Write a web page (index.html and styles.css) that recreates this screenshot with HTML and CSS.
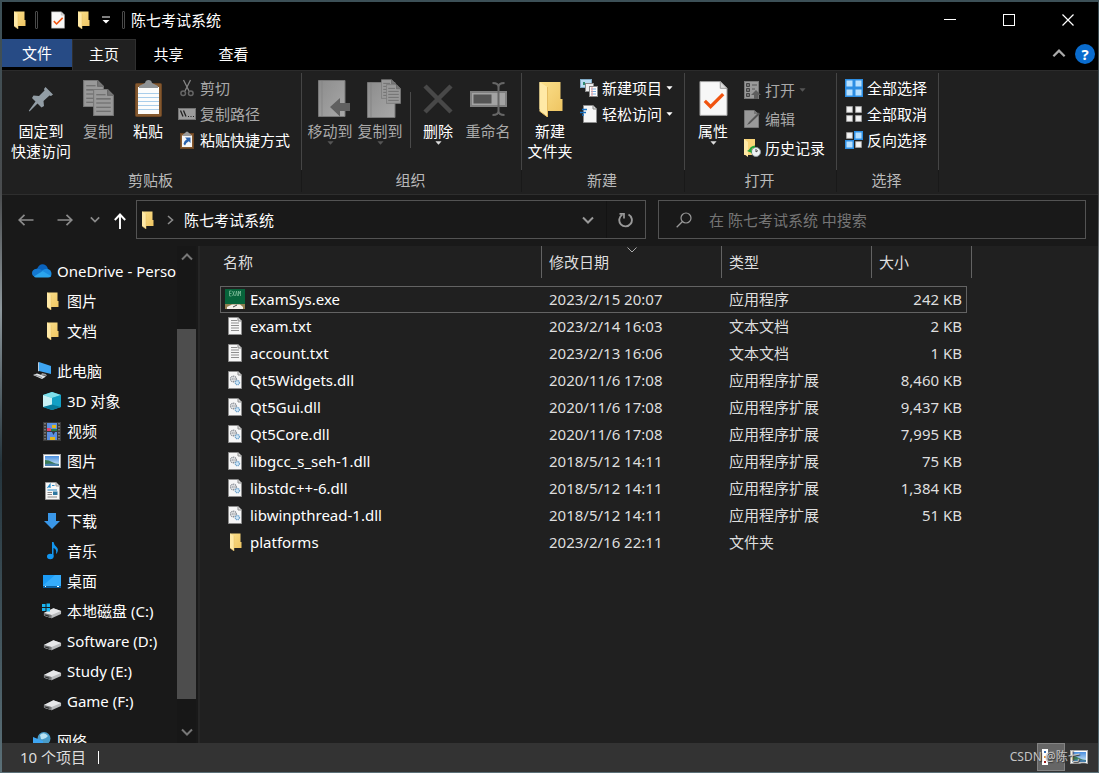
FILE: index.html
```html
<!DOCTYPE html>
<html lang="zh-CN">
<head>
<meta charset="utf-8">
<title>陈七考试系统</title>
<link rel="stylesheet" href="styles.css">
</head>
<body>
<svg class="sprite" aria-hidden="true">
  <defs>
    <linearGradient id="g-folder" x1="0" y1="0" x2="1" y2="1"><stop offset="0" stop-color="#fbe08c"/><stop offset="1" stop-color="#efc562"/></linearGradient>
    <linearGradient id="g-sky" x1="0" y1="0" x2="0" y2="1"><stop offset="0" stop-color="#4a8fe0"/><stop offset="1" stop-color="#d5ecf8"/></linearGradient>
    <linearGradient id="g-grey" x1="0" y1="0" x2="1" y2="1"><stop offset="0" stop-color="#8c8c8c"/><stop offset="1" stop-color="#a8a8a8"/></linearGradient>
  </defs>
  <symbol id="folder" viewBox="0 0 24 36">
    <path d="M1 1H22V18H24V30H6L1 28Z" fill="url(#g-folder)"/>
    <path d="M1 1L9 6V36L1 30Z" fill="#ffe9a6"/>
    <path d="M9 6V36L1 30" fill="none" stroke="#e6bd62"/>
  </symbol>
  <symbol id="checkdoc" viewBox="0 0 30 37">
    <path d="M1 1H22L29 8V36H1Z" fill="#f7f7f7" stroke="#9a9a9a"/>
    <path d="M22 1V8H29Z" fill="#ddd" stroke="#9a9a9a"/>
    <path d="M6 21L12 27L25 14" fill="none" stroke="#f0530f" stroke-width="3.4"/>
  </symbol>
  <symbol id="chev-down" viewBox="0 0 12 8"><path d="M1 1.5L6 6.5L11 1.5" fill="none" stroke="currentColor" stroke-width="2"/></symbol>
  <symbol id="chev-up" viewBox="0 0 12 8"><path d="M1 6.5L6 1.5L11 6.5" fill="none" stroke="currentColor" stroke-width="2"/></symbol>
  <symbol id="tri" viewBox="0 0 8 4"><path d="M0.5 0H7.5L4 4Z" fill="currentColor"/></symbol>
  <symbol id="textdoc" viewBox="0 0 14 18">
    <path d="M0.5 0.5H10L13.5 4V17.5H0.5Z" fill="#f6f6f6" stroke="#8e8e8e"/>
    <path d="M10 0.5V4H13.5" fill="#ddd" stroke="#8e8e8e"/>
    <path d="M3 3.5H9M3 6H11M3 8.5H11M3 11H11M3 13.5H11" stroke="#8f8f8f"/>
  </symbol>
  <symbol id="dll" viewBox="0 0 14 18">
    <path d="M0.5 0.5H10L13.5 4V17.5H0.5Z" fill="#f6f6f6" stroke="#8e8e8e"/>
    <path d="M10 0.5V4H13.5" fill="#ddd" stroke="#8e8e8e"/>
    <circle cx="5.4" cy="8" r="2.8" fill="none" stroke="#8a8f96" stroke-width="1.4" stroke-dasharray="1.2 .6"/><circle cx="5.4" cy="8" r="1" fill="none" stroke="#8a8f96" stroke-width=".7"/>
    <circle cx="9.4" cy="11.6" r="2.1" fill="#cfe5f5" stroke="#6fa3cc" stroke-width="1.3" stroke-dasharray="1.1 .5"/>
  </symbol>
  <symbol id="picture" viewBox="0 0 18 14">
    <rect x=".5" y=".5" width="17" height="13" fill="#fff" stroke="#a5a5a5"/>
    <rect x="2" y="2" width="14" height="10" fill="url(#g-sky)"/>
    <path d="M2 6Q6 6 9 8T16 10V12H2Z" fill="#3c7a55"/><path d="M2 10Q9 9 16 10.5V12H2Z" fill="#467fae"/>
  </symbol>
  <symbol id="drive" viewBox="0 0 20 12">
    <path d="M1 6L11 1L19 4V7L9 11.5L1 9Z" fill="#b9bbbd"/>
    <path d="M1 6L11 1L19 4L9 8Z" fill="#e6e7e9"/>
    <path d="M1 6L9 8V11.5L1 9Z" fill="#77797b"/><path d="M2.3 7.6L6.5 8.8V9.9L2.3 8.7Z" fill="#222"/>
  </symbol>
  <symbol id="tile" viewBox="0 0 8 8"><rect x=".75" y=".75" width="6.5" height="6.5" fill="#f4f4f4" stroke="#aaa"/></symbol>
  <symbol id="tile-on" viewBox="0 0 9 9"><rect width="9" height="9" fill="#2d8ee3"/><rect x="1.5" y="1.5" width="6" height="6" fill="#b7e0ff"/></symbol>
  <symbol id="greydoc" viewBox="0 0 20 26">
    <path d="M.5 .5H14L19.500 6V25.500H.5Z" fill="#999" stroke="#777"/>
    <path d="M14 .5V6H19.500" fill="#777" stroke="#666"/>
    <path d="M3 5.500H12M3 9.500H17M3 13.500H17M3 17.500H17M3 21.500H17" stroke="#666"/>
  </symbol>
</svg>

<div class="window">
  <header class="titlebar">
    <svg class="qfolder" width="13" height="18"><use href="#folder"/></svg>
    <span class="tsep"></span>
    <button class="qbtn" aria-label="属性"><svg width="14" height="18"><use href="#checkdoc"/></svg></button>
    <button class="qbtn" aria-label="新建文件夹"><svg width="13" height="18"><use href="#folder"/></svg></button>
    <button class="qbtn qmore" aria-label="自定义快速访问工具栏"><svg width="8" height="8" viewBox="0 0 8 8"><path d="M0 1H8" stroke="#fff"/><path d="M.5 4H7.500L4 7.500Z" fill="#fff"/></svg></button>
    <span class="tsep"></span>
    <h1 class="title">陈七考试系统</h1>
    <div class="caption">
      <button aria-label="最小化"><svg width="12" height="12"><path d="M0 5.500H12" stroke="#fff"/></svg></button>
      <button aria-label="最大化"><svg width="12" height="12"><rect x=".5" y=".5" width="11" height="11" fill="none" stroke="#fff"/></svg></button>
      <button aria-label="关闭"><svg width="12" height="12"><path d="M.5 .5L11.500 11.500M11.500 .5L.5 11.500" stroke="#fff" stroke-width="1.200"/></svg></button>
    </div>
  </header>

  <nav class="tabs">
    <button class="tab file">文件</button>
    <button class="tab active">主页</button>
    <button class="tab">共享</button>
    <button class="tab">查看</button>
    <div class="tabtools">
      <button class="collapse" aria-label="折叠功能区"><svg width="14" height="9"><use href="#chev-up"/></svg></button>
      <button class="help">?</button>
    </div>
  </nav>

  <section class="ribbon">
    <div class="group clip">
      <div class="tools">
        <button class="big wide"><span class="pic"><svg width="26" height="26" viewBox="0 0 26 26"><path d="M17.500 1L25 8.500L23 10L21.500 9.500L15.500 15L16 20L13.500 21.500L9.500 17.500L1.500 25.500L.8 24.800L7.500 15.500L4 12L5.500 9.500L11 10L16.500 4.500L16 3Z" fill="#929da5"/></svg></span><span>固定到<br>快速访问</span></button>
        <button class="big off"><span class="pic"><svg width="31" height="37"><use href="#greydoc" width="21" height="27" x="0" y="0"/><use href="#greydoc" width="21" height="27" x="10" y="9"/></svg></span><span>复制</span></button>
        <button class="big"><span class="pic"><svg width="27" height="37" viewBox="0 0 27 37"><rect x=".5" y="3.500" width="26" height="33" rx="1" fill="#84592f" stroke="#6b4524"/><rect x="3" y="7" width="21" height="27" fill="#fcfcfc"/><path d="M3 13.500H24M3 17.500H24M3 21.500H24M3 25.500H24M3 29.500H24" stroke="#a9cdea"/><path d="M4 8V6L10 3Q10.500 0 13.500 0T17 3L23 6V8Z" fill="#8f9396"/></svg></span><span>粘贴</span></button>
        <div class="stack">
          <button class="small off"><span class="ico"><svg width="14" height="18" viewBox="0 0 14 18"><path d="M3.500 1L9 12M10.500 1L5 12" stroke="#858585" stroke-width="1.300"/><circle cx="3.200" cy="14.300" r="2.300" fill="none" stroke="#666" stroke-width="1.500"/><circle cx="10.800" cy="14.300" r="2.300" fill="none" stroke="#666" stroke-width="1.500"/></svg></span>剪切</button>
          <button class="small off"><span class="ico"><svg width="18" height="12" viewBox="0 0 18 12"><rect x=".5" y=".5" width="17" height="11" fill="#9c9c9c" stroke="#747474"/><path d="M2.500 2.500L5 8.500M5.500 2.500L8 8.500" stroke="#222" stroke-width="1.300"/><path d="M10 8.500h1M12.500 8.500h1M15 8.500h1" stroke="#222"/></svg></span>复制路径</button>
          <button class="small"><span class="ico"><svg width="14" height="18" viewBox="0 0 14 18"><rect x=".5" y="2.500" width="13" height="15" fill="#84592f" stroke="#6b4524"/><rect x="2" y="4.500" width="10" height="11.500" fill="#f7f7f7"/><path d="M3 5V3.500L5 2Q7 -1 9 2L11 3.500V5Z" fill="#9a9a9a"/><path d="M5 6.500H10.500V12L8.800 10.300Q6 11.500 5 14.500L3.500 13Q4 9.800 6.800 8.300Z" fill="#2a62ad"/></svg></span>粘贴快捷方式</button>
        </div>
      </div>
      <h2>剪贴板</h2>
    </div>

    <div class="group org">
      <div class="tools">
        <button class="big off"><span class="pic trail"><svg width="32" height="37" viewBox="0 0 32 37"><path d="M.5 .5H27V36.500H.5Z" fill="url(#g-grey)" stroke="#777"/><path d="M4 1V36" stroke="#858585"/><path d="M12 27L22 18V23H32V31H22V36.500Z" fill="#606060"/></svg></span><span>移动到</span><svg class="drop" width="7" height="4"><use href="#tri"/></svg></button>
        <button class="big off"><span class="pic trail"><svg width="34" height="39" viewBox="0 0 34 39"><path d="M.5 3.500H28V38.500H.5Z" fill="url(#g-grey)" stroke="#777"/><path d="M4 4V38" stroke="#858585"/><use href="#greydoc" x="14" y="0" width="15" height="20"/><use href="#greydoc" x="19" y="5" width="15" height="20"/></svg></span><span>复制到</span><svg class="drop" width="7" height="4"><use href="#tri"/></svg></button>
        <span class="vsep"></span>
        <button class="big"><span class="pic"><svg width="30" height="30" viewBox="0 0 30 30"><path d="M2 2L28 28M28 2L2 28" stroke="#484848" stroke-width="4.500"/></svg></span><span>删除</span><svg class="drop" width="7" height="4"><use href="#tri"/></svg></button>
        <button class="big off"><span class="pic"><svg width="37" height="34" viewBox="0 0 37 34"><rect x="1" y="10" width="35" height="14" fill="#a3a3a3" stroke="#808080" stroke-width="2"/><rect x="3.500" y="12.500" width="18" height="9" fill="#555"/><path d="M22.500 1Q28.500 1 28.500 5Q28.500 1 34.500 1M28.500 4V30M22.500 33Q28.500 33 28.500 29Q28.500 33 34.500 33" fill="none" stroke="#666" stroke-width="2"/></svg></span><span>重命名</span></button>
      </div>
      <h2>组织</h2>
    </div>

    <div class="group new">
      <div class="tools">
        <button class="big"><span class="pic"><svg width="25" height="36"><use href="#folder"/></svg></span><span>新建<br>文件夹</span></button>
        <div class="stack">
          <button class="small"><span class="ico"><svg width="18" height="18" viewBox="0 0 18 18"><rect x=".5" y=".5" width="11" height="8" fill="#b9dcf2" stroke="#7fa9c5"/><path d="M3 6V3H5V6Z" fill="#2e8a70"/><rect x="5.500" y="4.500" width="8" height="8" fill="#eee" stroke="#888"/><rect x="9.500" y="7.500" width="8" height="10" fill="#fff" stroke="#888"/><path d="M11 10H16M11 12.500H16M11 15H16" stroke="#7baee0"/><path d="M12 8V17" stroke="#f09a94"/></svg></span>新建项目<svg class="more" width="7" height="4"><use href="#tri"/></svg></button>
          <button class="small"><span class="ico"><svg width="18" height="18" viewBox="0 0 18 18"><path d="M3.500 .5H13L16.500 4V17.500H3.500Z" fill="#f6f6f6" stroke="#8e8e8e"/><path d="M13 .5V4H16.500" fill="#ddd" stroke="#888"/><path d="M2 4.500H7M0 7.500H6M2 10H4" stroke="#1672c4" stroke-width="1.400"/></svg></span>轻松访问<svg class="more" width="7" height="4"><use href="#tri"/></svg></button>
        </div>
      </div>
      <h2>新建</h2>
    </div>

    <div class="group open">
      <div class="tools">
        <button class="big"><span class="pic"><svg width="29" height="37"><use href="#checkdoc"/></svg></span><span>属性</span><svg class="drop" width="7" height="4"><use href="#tri"/></svg></button>
        <div class="stack loose">
          <button class="small off"><span class="ico"><svg width="17" height="18" viewBox="0 0 17 18"><rect x=".5" y=".5" width="14" height="17" fill="#9a9a9a" stroke="#777"/><path d="M2.500 2.500h3v3h-3zM2.500 7.500h3v3h-3zM2.500 12.500h3v3h-3z" fill="#777" stroke="#444"/><path d="M8 4H13M8 8H11" stroke="#555"/><path d="M12 9L17 14H14V18H10V14H7Z" fill="#5e5e5e"/></svg></span>打开<svg class="more" width="7" height="4"><use href="#tri"/></svg></button>
          <button class="small off"><span class="ico"><svg width="16" height="18" viewBox="0 0 16 18"><path d="M.5 .5H10L14.500 4V17.500H.5Z" fill="#999" stroke="#777"/><path d="M10 .5V4H14.500" fill="#777"/><path d="M3 15L5 12L14.500 2.500L16 4L6 13.500Z" fill="#555"/></svg></span>编辑</button>
          <button class="small"><span class="ico"><svg width="18" height="18" viewBox="0 0 18 18"><path d="M1 0H12V9L9 16H1Z" fill="#f8d477"/><path d="M1 0L5 3V18L1 15Z" fill="#ffe9a6"/><circle cx="13" cy="13" r="4.500" fill="#edf1f3" stroke="#8e979d"/><path d="M13 10V13L15 11.500" fill="none" stroke="#444"/><path d="M4 12L8 9.500L9 14Z" fill="#23a33b"/><path d="M7 13Q7 8 12 7.500" fill="none" stroke="#23a33b" stroke-width="2.200"/></svg></span>历史记录</button>
        </div>
      </div>
      <h2>打开</h2>
    </div>

    <div class="group select">
      <div class="tools">
        <div class="stack">
          <button class="small"><span class="ico"><svg width="18" height="18"><use href="#tile-on" x="0" y="0" width="9" height="9"/><use href="#tile-on" x="9" y="0" width="9" height="9"/><use href="#tile-on" x="0" y="9" width="9" height="9"/><use href="#tile-on" x="9" y="9" width="9" height="9"/></svg></span>全部选择</button>
          <button class="small"><span class="ico"><svg width="18" height="18"><use href="#tile" x="1" y="1" width="7" height="7"/><use href="#tile" x="10" y="1" width="7" height="7"/><use href="#tile" x="1" y="10" width="7" height="7"/><use href="#tile" x="10" y="10" width="7" height="7"/></svg></span>全部取消</button>
          <button class="small"><span class="ico"><svg width="18" height="18"><use href="#tile" x="1" y="1" width="7" height="7"/><use href="#tile-on" x="9" y="0" width="9" height="9"/><use href="#tile-on" x="0" y="9" width="9" height="9"/><use href="#tile" x="10" y="10" width="7" height="7"/></svg></span>反向选择</button>
        </div>
      </div>
      <h2>选择</h2>
    </div>
  </section>

  <div class="navbar">
    <div class="history">
      <button aria-label="后退"><svg width="16" height="12" viewBox="0 0 16 12"><path d="M1 6H15.500M6.500 .8L1.200 6L6.500 11.200" fill="none" stroke="#8b8b8b" stroke-width="1.700"/></svg></button>
      <button aria-label="前进"><svg width="16" height="12" viewBox="0 0 16 12"><path d="M.5 6H15M9.500 .8L14.800 6L9.500 11.200" fill="none" stroke="#8b8b8b" stroke-width="1.700"/></svg></button>
      <button class="recent" aria-label="最近浏览的位置"><svg width="10" height="7"><use href="#chev-down"/></svg></button>
      <button class="up" aria-label="向上"><svg width="12" height="16" viewBox="0 0 12 16"><path d="M6 16V1.500M.8 7L6 1.500L11.200 7" fill="none" stroke="#fff" stroke-width="1.900"/></svg></button>
    </div>
    <div class="address">
      <svg width="13" height="18"><use href="#folder"/></svg>
      <svg class="crumb" width="7" height="10" viewBox="0 0 7 10"><path d="M1 1L5.500 5L1 9" fill="none" stroke="#8b8b8b" stroke-width="1.600"/></svg>
      <span class="path">陈七考试系统</span>
      <button class="list" aria-label="以前的位置"><svg width="12" height="8"><use href="#chev-down"/></svg></button>
      <button class="refresh" aria-label="刷新"><svg width="16" height="16" viewBox="0 0 16 16"><path d="M10.500 2.500A6.300 6.300 0 1 1 4.300 2.700" fill="none" stroke="#999" stroke-width="1.900"/><path d="M1.500 1.800H6V6.500" fill="none" stroke="#999" stroke-width="1.700"/></svg></button>
    </div>
    <label class="search">
      <svg width="16" height="16" viewBox="0 0 16 16"><circle cx="10" cy="6" r="5" fill="none" stroke="#999" stroke-width="1.200"/><path d="M6.500 9.500L.7 15.300" stroke="#999" stroke-width="1.300"/></svg>
      <input type="text" aria-label="搜索" placeholder="在 陈七考试系统 中搜索">
    </label>
  </div>

  <main class="body">
    <aside class="side">
      <ul class="tree">
        <li><span class="ico"><svg width="20" height="14" viewBox="0 0 20 14"><path d="M5 5Q7 0 11 .3Q15 1 16 5L10 9Z" fill="#0a63bd"/><path d="M4.500 4.800Q8 4 10.500 7L4 13Q0 12.500 0 9T4.500 4.800Z" fill="#1478d0"/><path d="M10 6.500Q15 3 18.500 6.500Q20.500 10 18.500 13L13 11Z" fill="#1b8be0"/><path d="M2 12.500L10.500 7L19 12Q18 13.500 16 13.500H4Q2.500 13.300 2 12.500Z" fill="#2ba5ee"/></svg></span>OneDrive - Personal</li>
        <li class="sub"><span class="ico"><svg width="13" height="18"><use href="#folder"/></svg></span>图片</li>
        <li class="sub"><span class="ico"><svg width="13" height="18"><use href="#folder"/></svg></span>文档</li>
        <li class="top"><span class="ico"><svg width="20" height="18" viewBox="0 0 20 18"><path d="M7 0L19 4V12L7 9Z" fill="#3ea5f2"/><path d="M7 0V9L6 9.500V.5Z" fill="#bcd"/><path d="M10 11L14 12L15 14L9 13Z" fill="#999"/><path d="M1 13L5 11.500L14 14.500L10 17Z" fill="#dfe3e6"/><path d="M3 13L10 15.500" stroke="#8a8f94"/></svg></span>此电脑</li>
        <li class="sub"><span class="ico"><svg width="18" height="18" viewBox="0 0 18 18"><path d="M9 0L18 3V15L9 18L0 15V3Z" fill="#1fb3cf"/><path d="M0 3L9 0L18 3L9 6Z" fill="#7fe0ec"/><path d="M0 3L9 6V14L0 15Z" fill="#c9f1f5"/><path d="M9 6L18 3V15L9 13Z" fill="#12a0c5"/><path d="M0 15L9 12.500L18 15L9 18Z" fill="#087b9c"/></svg></span>3D 对象</li>
        <li class="sub"><span class="ico"><svg width="18" height="19" viewBox="0 0 18 19"><rect width="18" height="19" fill="#3a3a3a"/><path d="M2 1V19M16 1V19" stroke="#777" stroke-width="2" stroke-dasharray="1.500 1.500"/><rect x="4" y="1" width="10" height="8" fill="#5b8fe0"/><rect x="4" y="10" width="10" height="8" fill="#5b8fe0"/><path d="M4 6H8V9H4Z" fill="#e1426b"/><path d="M9 3H13V6H9ZM7 15H12V18H7Z" fill="#e3b71e"/><path d="M8 7H14V9H8Z" fill="#26804a"/><path d="M9 10H12L10.500 13Z" fill="#26364a"/></svg></span>视频</li>
        <li class="sub"><span class="ico"><svg width="18" height="14"><use href="#picture"/></svg></span>图片</li>
        <li class="sub"><span class="ico"><svg width="15" height="18" viewBox="0 0 15 18"><path d="M.5 .5H11L14.500 4V17.500H.5Z" fill="#f6f6f6" stroke="#999"/><path d="M11 .5V4H14.500" fill="#ddd" stroke="#999"/><path d="M2.500 6L5 2.500V6M7 3.500H9.500M2.500 8H12" fill="none" stroke="#2489c7" stroke-width="1.200"/><path d="M2.500 10.500H7M2.500 12.500H7M2.500 15H12" stroke="#888"/><rect x="8" y="9.500" width="4.500" height="3.500" fill="#2d76a0"/></svg></span>文档</li>
        <li class="sub"><span class="ico"><svg width="16" height="16" viewBox="0 0 16 16"><path d="M4 0H12V8H16L8 16L0 8H4Z" fill="#3a97e8"/></svg></span>下载</li>
        <li class="sub"><span class="ico"><svg width="13" height="18" viewBox="0 0 13 18"><path d="M6 0H7.500Q8 3 10.500 5T11 11L10 12Q11 7 7.500 6V14.500H6Z" fill="#1296f0"/><ellipse cx="4.300" cy="14.500" rx="3.300" ry="2.700" fill="#1296f0"/></svg></span>音乐</li>
        <li class="sub"><span class="ico"><svg width="18" height="13" viewBox="0 0 18 13"><rect width="18" height="13" fill="#1b9bf5"/><path d="M0 10.500L12 0H18V11H0Z" fill="#35acfb"/><path d="M0 12H18" stroke="#0b5f9f" stroke-width="2"/><path d="M2 11.500H3M14 11.500H16" stroke="#fff"/></svg></span>桌面</li>
        <li class="sub"><span class="ico"><svg width="20" height="16" viewBox="0 0 20 16"><use href="#drive" x="1" y="4" width="19" height="12"/><path d="M0 1h3.500v3H0zM4.500 .5H8v3.500H4.500zM0 5h3.500v3H0zM4.500 5H8v3.500H4.500z" fill="#19b5f2"/></svg></span>本地磁盘 (C:)</li>
        <li class="sub disk"><span class="ico"><svg width="19" height="12"><use href="#drive"/></svg></span>Software (D:)</li>
        <li class="sub disk"><span class="ico"><svg width="19" height="12"><use href="#drive"/></svg></span>Study (E:)</li>
        <li class="sub disk"><span class="ico"><svg width="19" height="12"><use href="#drive"/></svg></span>Game (F:)</li>
        <li class="top"><span class="ico"><svg width="20" height="18" viewBox="0 0 20 18"><circle cx="12" cy="6.500" r="6.500" fill="#4a9cc8"/><path d="M8 3Q12 -1 16 4Q13 8 9 7Z" fill="#b9e2f2"/><path d="M1 5L11 9V17L1 14Z" fill="#3ea5f2"/><path d="M3 16L12 15L15 17L6 18Z" fill="#ddd"/></svg></span>网络</li>
      </ul>
      <div class="scroll">
        <button aria-label="向上滚动"><svg width="12" height="8"><use href="#chev-up"/></svg></button>
        <div class="track"><div class="thumb"></div></div>
        <button aria-label="向下滚动"><svg width="12" height="8"><use href="#chev-down"/></svg></button>
      </div>
    </aside>

    <section class="content">
      <table class="files">
        <thead>
          <tr>
            <th class="c-name"><button>名称</button></th>
            <th class="c-date"><button>修改日期<svg class="sort" width="10" height="6" viewBox="0 0 10 6"><path d="M.5 .5L5 5L9.500 .5" fill="none" stroke="#aaa"/></svg></button></th>
            <th class="c-type"><button>类型</button></th>
            <th class="c-size"><button>大小</button></th>
          </tr>
        </thead>
        <tbody>
          <tr class="focus"><td><span class="fname"><span class="ico"><svg width="20" height="20" viewBox="0 0 20 20"><rect width="20" height="20" fill="#07643b"/><path d="M4.500 2V7M4.500 2H6.500M4.500 4.500H6.500M4.500 7H6.500M7.500 2L9.500 7M9.500 2L7.500 7M10.500 7L11.500 2L12.500 7M13.500 7V2L14.500 4.500L15.500 2V7" fill="none" stroke="#86c2a0" stroke-width=".7"/><rect y="15" width="20" height="5" fill="#8f7f50"/><path d="M2 18L7 15.500H15L18 18V20H2Z" fill="#f3efe9"/><path d="M8 18L12 16" stroke="#444"/></svg></span>ExamSys.exe</span></td><td>2023/2/15 20:07</td><td>应用程序</td><td>242 KB</td></tr>
          <tr><td><span class="fname"><span class="ico"><svg width="14" height="18"><use href="#textdoc"/></svg></span>exam.txt</span></td><td>2023/2/14 16:03</td><td>文本文档</td><td>2 KB</td></tr>
          <tr><td><span class="fname"><span class="ico"><svg width="14" height="18"><use href="#textdoc"/></svg></span>account.txt</span></td><td>2023/2/13 16:06</td><td>文本文档</td><td>1 KB</td></tr>
          <tr><td><span class="fname"><span class="ico"><svg width="14" height="18"><use href="#dll"/></svg></span>Qt5Widgets.dll</span></td><td>2020/11/6 17:08</td><td>应用程序扩展</td><td>8,460 KB</td></tr>
          <tr><td><span class="fname"><span class="ico"><svg width="14" height="18"><use href="#dll"/></svg></span>Qt5Gui.dll</span></td><td>2020/11/6 17:08</td><td>应用程序扩展</td><td>9,437 KB</td></tr>
          <tr><td><span class="fname"><span class="ico"><svg width="14" height="18"><use href="#dll"/></svg></span>Qt5Core.dll</span></td><td>2020/11/6 17:08</td><td>应用程序扩展</td><td>7,995 KB</td></tr>
          <tr><td><span class="fname"><span class="ico"><svg width="14" height="18"><use href="#dll"/></svg></span>libgcc_s_seh-1.dll</span></td><td>2018/5/12 14:11</td><td>应用程序扩展</td><td>75 KB</td></tr>
          <tr><td><span class="fname"><span class="ico"><svg width="14" height="18"><use href="#dll"/></svg></span>libstdc++-6.dll</span></td><td>2018/5/12 14:11</td><td>应用程序扩展</td><td>1,384 KB</td></tr>
          <tr><td><span class="fname"><span class="ico"><svg width="14" height="18"><use href="#dll"/></svg></span>libwinpthread-1.dll</span></td><td>2018/5/12 14:11</td><td>应用程序扩展</td><td>51 KB</td></tr>
          <tr><td><span class="fname"><span class="ico"><svg width="13" height="18"><use href="#folder"/></svg></span>platforms</span></td><td>2023/2/16 22:11</td><td>文件夹</td><td></td></tr>
        </tbody>
      </table>
    </section>
  </main>

  <footer class="status">
    <span class="count">10 个项目</span>
    <span class="bar"></span>
    <div class="views">
      <button class="view on" aria-label="详细信息"><svg width="18" height="16" viewBox="0 0 18 16"><rect width="6" height="16" fill="#fff"/><path d="M2 2h2v2H2z" fill="#3b6fb5"/><path d="M2 7h2v2H2z" fill="#e29a2d"/><path d="M2 12h2v2H2z" fill="#a02020"/><path d="M8 3H12M8 8H12M8 13H12" stroke="#8a8a8a"/></svg></button>
      <button class="view" aria-label="大缩略图"><svg width="18" height="14"><use href="#picture"/></svg></button>
      <span class="mark">CSDN @陈七_</span>
    </div>
  </footer>
</div>
</body>
</html>
```
FILE: styles.css
```css
* { box-sizing: border-box; }
html, body { height: 100%; }
body {
  margin: 0;
  padding: 2px 1px 1px 2px;
  background: linear-gradient(#3c5057, #4a4c4e 25%, #8d979c 40%, #24343c 60%, #5b7078);
  color: #fff;
  font: 15px/20px "Noto Sans", "Noto Sans CJK SC", sans-serif;
}
button {
  padding: 0;
  border: 0;
  background: none;
  color: inherit;
  font: inherit;
}
svg { display: block; flex: none; }
.sprite { position: absolute; width: 0; height: 0; }
h1, h2 { margin: 0; font: inherit; }
.ico { display: flex; flex: none; align-items: center; justify-content: center; }

.window {
  display: flex;
  flex-direction: column;
  height: 100%;
  overflow: hidden;
  background: #191919;
}

/* Title bar */
.titlebar { display: flex; flex: none; align-items: center; height: 37px; padding: 0 1px 2px 0; background: #000; }
.qfolder { margin: 0 9px 0 11px; }
.tsep { width: 3px; height: 18px; border: 1px solid #4a4a4a; border-radius: 1px; }
.qbtn { margin-left: 12px; }
.tsep + .qbtn { margin-left: 13px; }
.qmore { margin-right: 12px; }
.title { margin-left: 6px; }
.caption { display: flex; align-self: stretch; margin-left: auto; }
.caption button { display: flex; align-items: center; justify-content: center; width: 59px; }

/* Ribbon tabs */
.tabs { display: flex; flex: none; height: 31px; background: #000; }
.tab { width: 65px; height: 31px; padding-bottom: 2px; }
.tab.file { width: 70px; height: 28px; padding-bottom: 0; background: #274b85; }
.tab.active { width: 64px; background: #202020; border: 1px solid #2f2f2f; border-bottom: 0; }
.tabtools { display: flex; align-items: center; gap: 9px; margin-left: auto; padding: 0 3px 2px 0; }
.collapse { color: #aaa; }
.help {
  width: 20px;
  height: 20px;
  border-radius: 50%;
  background: #0a6cce;
  font-weight: bold;
}

/* Ribbon */
.ribbon {
  display: flex;
  flex: none;
  height: 125px;
  padding-top: 2px;
  background: #202020;
  border-top: 1px solid #2b2b2b;
  border-bottom: 1px solid #2e2e2e;
}
.group { display: flex; flex-direction: column; flex: none; }
.group .tools { display: flex; height: 97px; padding-top: 5px; border-right: 1px solid #454545; }
.group h2 { height: 22px; padding-right: 2px; border-right: 1px solid #191919; color: #b9b9b9; text-align: center; }
.clip { width: 300px; }
.org { width: 220px; }
.new { width: 163px; }
.open { width: 152px; }
.select { width: 102px; }
.clip .tools { padding-left: 7px; }
.org .tools, .new .tools, .open .tools { padding-left: 3px; }
.select .tools { padding-left: 8px; }

.big { display: flex; flex-direction: column; align-items: center; width: 50px; white-space: nowrap; }
.big.wide { width: 64px; }
.pic { display: flex; align-items: center; justify-content: center; height: 41px; margin-bottom: 2px; }
.pic.trail { padding-left: 8px; }
.off { color: #a9a9a9; }
.drop { color: #ddd; }
.off .drop, .off .more { color: #555; }
.vsep { width: 1px; height: 56px; margin: 14px 2px 0 5px; background: #4a4a4a; }
.stack { display: flex; flex-direction: column; margin-left: 5px; }
.select .stack { margin-left: 0; }
.small { display: flex; align-items: center; gap: 4px; height: 26px; margin: -3px 0 3px; white-space: nowrap; }
.loose .small { height: 29px; }
.small .ico { width: 18px; height: 18px; }

/* Navigation row */
.navbar { display: flex; flex: none; align-items: center; height: 51px; padding: 0 12px 2px 16px; }
.history { display: flex; flex: none; align-items: center; gap: 23px; width: 118px; color: #8b8b8b; }
.history .recent { margin-left: -6px; }
.history .up { margin-left: -9px; padding-top: 3px; }
.address, .search { display: flex; align-items: center; min-width: 0; height: 39px; border: 1px solid #535353; }
.address { flex: 510 1 510px; margin-right: 12px; padding-left: 4px; }
.search { flex: 428 1 428px; padding-left: 17px; gap: 17px; }
.crumb { margin: 0 10px 0 13px; }
.address .list { margin-left: auto; padding: 0 12px; color: #999; }
.refresh { display: flex; align-items: center; justify-content: center; width: 39px; height: 37px; border-left: 1px solid #131313; }
.search input {
  flex: 1;
  min-width: 0;
  padding: 0;
  border: 0;
  outline: 0;
  background: none;
  color: #fff;
  font: inherit;
}
.search input::placeholder { color: #757575; opacity: 1; }

/* Body */
.body { display: flex; flex: 1; min-height: 0; }
.side { display: flex; flex: none; width: 198px; border-right: 2px solid #262626; }
.tree { flex: 1; min-width: 0; margin: 0; padding: 10px 0 0; overflow: hidden; list-style: none; }
.tree li { display: flex; align-items: center; gap: 5px; height: 30px; padding-left: 30px; white-space: nowrap; }
.tree .sub { padding-left: 40px; }
.tree .top { margin-top: 10px; }
.tree .ico { width: 20px; height: 20px; }
.disk .ico { align-items: flex-end; }
.scroll { display: flex; flex-direction: column; flex: none; width: 19px; margin: 0 2px 0 0; background: #171717; color: #777; }
.scroll button { display: flex; align-items: center; justify-content: center; height: 22px; }
.track { display: flex; flex: 1; flex-direction: column; }
.track::before { content: ""; flex: 61; }
.thumb { flex: 370; background: #4d4d4d; }
.track::after { content: ""; flex: 22; }

.content { flex: 1; min-width: 0; padding-left: 20px; background: #202020; }
.files { width: 747px; table-layout: fixed; border-collapse: collapse; color: #dedede; }
.files th { height: 40px; padding: 0; font-weight: normal; vertical-align: top; }
.files th button { position: relative; display: block; width: 100%; height: 32px; padding-left: 7px; border-right: 1px solid #636363; text-align: left; }
.files .c-name { width: 322px; }
.files .c-date { width: 180px; }
.files .c-type { width: 150px; }
.files .c-name button { padding-left: 3px; }
.files .c-size button { width: 100px; }
.sort { position: absolute; top: 1px; left: 50%; margin-left: -5px; }
.files td { height: 27px; padding: 0 7px 1px; white-space: nowrap; }
.files td:last-child { padding-right: 5px; text-align: right; }
.files td:first-child { padding: 0 5px 1px; color: #fff; }
.fname { display: flex; align-items: center; gap: 5px; }
.fname .ico { width: 20px; height: 20px; }
.files .focus { outline: 1px solid #636363; outline-offset: -1px; }

/* Status bar */
.status { display: flex; flex: none; align-items: center; height: 29px; padding: 0 5px 1px 18px; background: #333; color: #dedede; }
.bar { width: 1px; height: 13px; margin-left: 12px; background: #fff; }
.views { position: relative; display: flex; align-items: center; margin-left: auto; }
.view { display: flex; align-items: center; justify-content: center; width: 28px; height: 28px; }
.view.on { background: #666; border: 1px solid #838383; }
.mark {
  position: absolute;
  right: 8px;
  color: #c4c4c4;
  font-size: 12px;
  white-space: nowrap;
  text-shadow: 1px 1px 1px #333;
}
```
